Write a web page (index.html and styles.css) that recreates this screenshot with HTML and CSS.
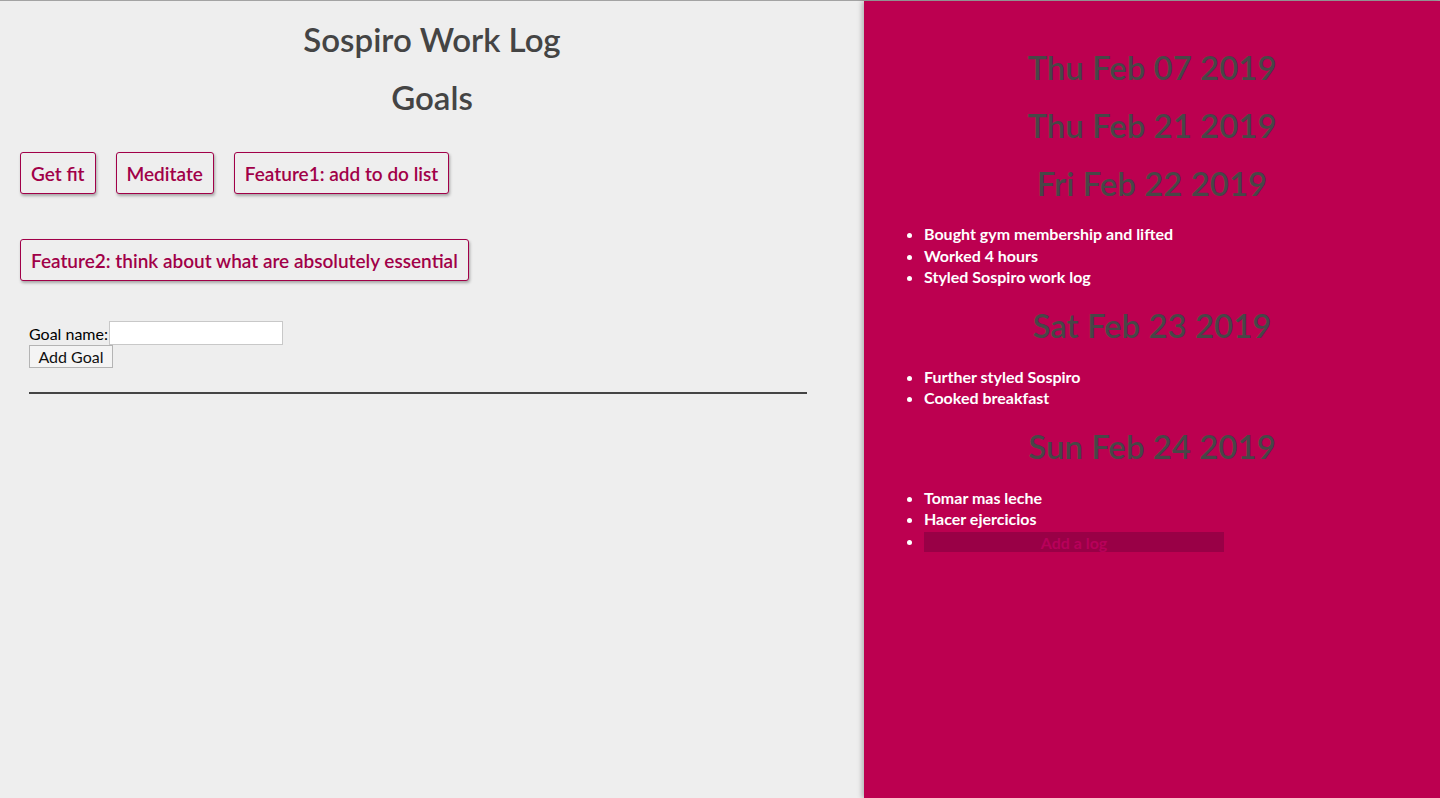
FILE: index.html
```html
<!DOCTYPE html>
<html>
<head>
<meta charset="utf-8">
<link rel="stylesheet" href="styles.css">
</head>
<body>
<div class="app">
  <main class="goals-pane">
    <h1 class="title">Sospiro Work Log</h1>
    <h2 class="subtitle">Goals</h2>
    <div class="goal-list">
      <button class="goal">Get fit</button>
      <button class="goal">Meditate</button>
      <button class="goal">Feature1: add to do list</button>
      <button class="goal">Feature2: think about what are absolutely essential</button>
    </div>
    <form class="goal-form">
      <label class="goal-label">Goal name:<input class="goal-input" type="text"></label>
      <button class="add-goal" type="button">Add Goal</button>
    </form>
    <hr class="divider">
  </main>
  <aside class="log-pane">
    <h2 class="day">Thu Feb 07 2019</h2>
    <h2 class="day">Thu Feb 21 2019</h2>
    <h2 class="day">Fri Feb 22 2019</h2>
    <ul class="entries first">
      <li>Bought gym membership and lifted</li>
      <li>Worked 4 hours</li>
      <li>Styled Sospiro work log</li>
    </ul>
    <h2 class="day">Sat Feb 23 2019</h2>
    <ul class="entries">
      <li>Further styled Sospiro</li>
      <li>Cooked breakfast</li>
    </ul>
    <h2 class="day">Sun Feb 24 2019</h2>
    <ul class="entries">
      <li>Tomar mas leche</li>
      <li>Hacer ejercicios</li>
      <li><input class="log-input" type="text" placeholder="Add a log"></li>
    </ul>
  </aside>
</div>
</body>
</html>
```

FILE: styles.css
```css
html, body {
  margin: 0;
  padding: 0;
  height: 100%;
}
body {
  font-family: "Lato", "Noto Sans", sans-serif;
  background: #eeeeee;
}
.app {
  display: flex;
  height: 798px;
  box-sizing: border-box;
  border-top: 1px solid #a3a3a3;
}
.goals-pane {
  width: 864px;
  flex: none;
  background: #eeeeee;
  padding: 0 20px;
  box-sizing: border-box;
}
.title {
  margin: 19px 0 0;
  text-align: center;
  font-size: 33px;
  font-weight: 600;
  color: #444444;
  line-height: 38px;
}
.subtitle {
  margin: 20px 0 0;
  text-align: center;
  font-size: 33px;
  font-weight: 600;
  color: #444444;
  line-height: 38px;
}
.goal-list {
  display: flex;
  flex-wrap: wrap;
  column-gap: 20px;
  row-gap: 45px;
  margin-top: 36px;
  width: 480px;
}
.goal {
  font-family: inherit;
  font-size: 19px;
  font-weight: 600;
  color: #a10048;
  background: #eeeeee;
  border: 1px solid #a10048;
  border-radius: 3px;
  padding: 0 10px;
  height: 42px;
  box-shadow: 1px 2px 3px rgba(0, 0, 0, 0.3);
}
.goal-form {
  margin: 40px 0 0 9px;
  display: flex;
  flex-direction: column;
  align-items: flex-start;
}
.goal-label {
  font-size: 16px;
  color: #000;
  display: flex;
  align-items: center;
}
.goal-input {
  width: 174px;
  height: 24px;
  box-sizing: border-box;
  border: 1px solid #c8c8c8;
  background: #fff;
  margin: 0 0 0 1px;
  padding: 0 4px;
}
.add-goal {
  font-family: inherit;
  font-size: 16px;
  height: 23px;
  width: 84px;
  padding: 0;
  border: 1px solid #b4b4b4;
  background: #f4f4f4;
  color: #111;
}
.divider {
  margin: 24px 37px 0 9px;
  border: 0;
  height: 2px;
  background: #444;
}
.log-pane {
  flex: 1;
  display: flex;
  flex-direction: column;
  background: #bc0050;
  box-shadow: -2px 0 5px rgba(0, 0, 0, 0.25);
  padding-top: 46px;
}
.day {
  margin: 0 0 18px;
  text-align: center;
  font-size: 33px;
  font-weight: 600;
  color: #474747;
  line-height: 40px;
}
.entries {
  margin: 3px 0 17px;
  padding-left: 60px;
  color: #fff;
  font-size: 16px;
  font-weight: 700;
  line-height: 21.5px;
}
.entries.first { margin: 2px 0 17px; }
.log-input {
  width: 300px;
  height: 20px;
  box-sizing: border-box;
  border: 0;
  background: #990046;
  text-align: center;
  font-family: inherit;
  font-size: 16px;
  font-weight: 700;
  vertical-align: middle;
}
.log-input::placeholder {
  color: #b8005a;
}
```
